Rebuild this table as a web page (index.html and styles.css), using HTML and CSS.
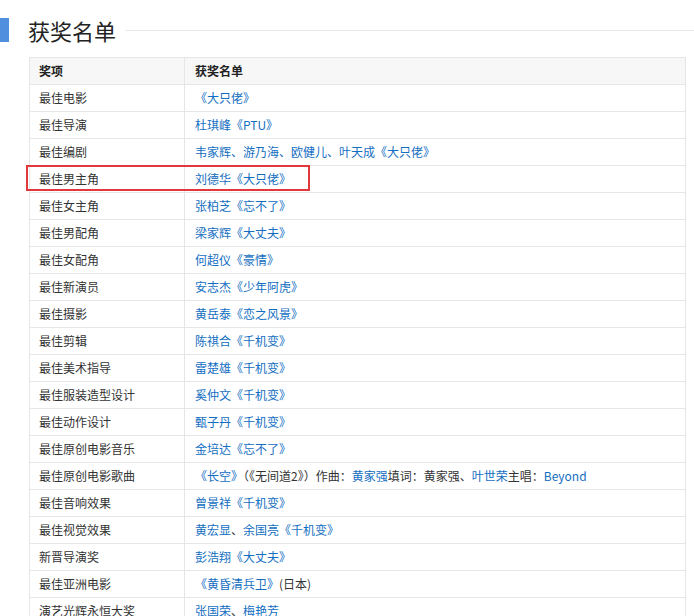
FILE: index.html
```html
<!DOCTYPE html>
<html lang="zh">
<head>
<meta charset="utf-8">
<link rel="stylesheet" href="styles.css">
</head>
<body>
<div class="title-row">
  <span class="bar"></span>
  <h2 class="title">获奖名单</h2>
  <span class="line"></span>
</div>
<div class="table-wrap">
  <table class="awards">
    <colgroup><col class="c1"><col class="c2"></colgroup>
    <thead>
      <tr><th>奖项</th><th>获奖名单</th></tr>
    </thead>
    <tbody>
      <tr><td>最佳电影</td><td><a>《大只佬》</a></td></tr>
      <tr><td>最佳导演</td><td><a>杜琪峰《PTU》</a></td></tr>
      <tr><td>最佳编剧</td><td><a>韦家辉、游乃海、欧健儿、叶天成《大只佬》</a></td></tr>
      <tr><td>最佳男主角</td><td><a>刘德华《大只佬》</a></td></tr>
      <tr><td>最佳女主角</td><td><a>张柏芝《忘不了》</a></td></tr>
      <tr><td>最佳男配角</td><td><a>梁家辉《大丈夫》</a></td></tr>
      <tr><td>最佳女配角</td><td><a>何超仪《豪情》</a></td></tr>
      <tr><td>最佳新演员</td><td><a>安志杰《少年阿虎》</a></td></tr>
      <tr><td>最佳摄影</td><td><a>黄岳泰《恋之风景》</a></td></tr>
      <tr><td>最佳剪辑</td><td><a>陈祺合《千机变》</a></td></tr>
      <tr><td>最佳美术指导</td><td><a>雷楚雄《千机变》</a></td></tr>
      <tr><td>最佳服装造型设计</td><td><a>奚仲文《千机变》</a></td></tr>
      <tr><td>最佳动作设计</td><td><a>甄子丹《千机变》</a></td></tr>
      <tr><td>最佳原创电影音乐</td><td><a>金培达《忘不了》</a></td></tr>
      <tr><td>最佳原创电影歌曲</td><td><a>《长空》</a>（《无间道2》）作曲：<a>黄家强</a>填词：黄家强、<a>叶世荣</a>主唱：<a>Beyond</a></td></tr>
      <tr><td>最佳音响效果</td><td><a>曾景祥《千机变》</a></td></tr>
      <tr><td>最佳视觉效果</td><td><a>黄宏显</a>、<a>余国亮《千机变》</a></td></tr>
      <tr><td>新晋导演奖</td><td><a>彭浩翔《大丈夫》</a></td></tr>
      <tr><td>最佳亚洲电影</td><td><a>《黄昏清兵卫》</a>(日本)</td></tr>
      <tr><td>演艺光辉永恒大奖</td><td><a>张国荣</a>、<a>梅艳芳</a></td></tr>
    </tbody>
  </table>
  <div class="highlight"></div>
</div>
</body>
</html>
```

FILE: styles.css
```css
html, body {
  margin: 0;
  padding: 0;
  background: #ffffff;
}
body {
  font-family: "Noto Sans CJK SC", "Liberation Sans", sans-serif;
  color: #333333;
  overflow: hidden;
}
.title-row {
  display: flex;
  align-items: center;
  height: 24px;
  margin-top: 18px;
}
.bar {
  width: 9px;
  height: 24px;
  background: #4f8fde;
  flex: none;
}
.title {
  margin: 0 0 0 19px;
  font-size: 22px;
  font-weight: normal;
  line-height: 24px;
  color: #222222;
  flex: none;
}
.line {
  flex: 1;
  margin-left: 10px;
  border-top: 1px solid #e6e6e6;
}
.table-wrap {
  position: relative;
  margin: 15px 0 0 29px;
  width: 657px;
}
.awards {
  width: 657px;
  border-collapse: collapse;
  table-layout: fixed;
  font-size: 12px;
  border: 1px solid #e3e3e3;
}
.c1 { width: 155px; }
.awards th,
.awards td {
  height: 26px;
  padding: 0 0 0 9px;
  border: 1px solid #e6e6e6;
  text-align: left;
  vertical-align: middle;
  line-height: 16px;
  white-space: nowrap;
}
.awards th {
  background: #f7f7f7;
  font-weight: bold;
  color: #222222;
}
.awards td + td,
.awards th + th {
  padding-left: 10px;
}
.awards a {
  color: #136ec2;
  text-decoration: none;
}
.highlight {
  position: absolute;
  left: -3px;
  top: 108px;
  width: 280px;
  height: 22px;
  border: 2px solid #e2373c;
  pointer-events: none;
}
```
